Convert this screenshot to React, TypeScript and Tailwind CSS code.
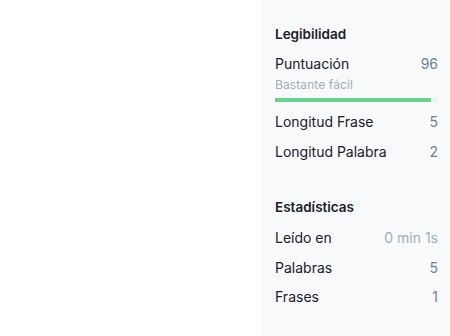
export default function App() {
  return (
    <div className="flex h-[336px] w-[450px] bg-white font-['Inter',sans-serif]">
      <div className="flex-1" />
      <aside className="w-[189px] bg-[#f8f9fb] pl-[14px] pr-[12px] pt-[25px]">
        <h3 className="text-[13.5px] font-semibold leading-[18px] text-[#1a202c]">Legibilidad</h3>
        <div className="mt-[12px] flex items-center justify-between text-[14px] leading-[18px]">
          <span className="text-[#1a202c]">Puntuación</span>
          <span className="text-[#718096]">96</span>
        </div>
        <div className="mt-[4px] text-[12px] leading-[16px] tracking-[0.1px] text-[#a0aec0]">Bastante fácil</div>
        <div className="mt-[5px] h-[4px] w-full bg-[#edf0f5]">
          <div className="h-full w-[96%] bg-[#68d391]" />
        </div>
        <div className="mt-[11px] flex flex-col gap-[12px] text-[14px] leading-[18px]">
          <div className="flex justify-between">
            <span className="text-[#1a202c]">Longitud Frase</span>
            <span className="text-[#718096]">5</span>
          </div>
          <div className="flex justify-between">
            <span className="text-[#1a202c]">Longitud Palabra</span>
            <span className="text-[#718096]">2</span>
          </div>
        </div>
        <h3 className="mt-[37px] text-[13.5px] font-semibold leading-[18px] text-[#1a202c]">Estadísticas</h3>
        <div className="mt-[13px] flex flex-col text-[14px] leading-[18px]">
          <div className="flex justify-between">
            <span className="text-[#1a202c]">Leído en</span>
            <span className="text-[#a0aec0]">0 min 1s</span>
          </div>
          <div className="mt-[12px] flex justify-between">
            <span className="text-[#1a202c]">Palabras</span>
            <span className="text-[#718096]">5</span>
          </div>
          <div className="mt-[11px] flex justify-between">
            <span className="text-[#1a202c]">Frases</span>
            <span className="text-[#718096]">1</span>
          </div>
        </div>
      </aside>
    </div>
  );
}
